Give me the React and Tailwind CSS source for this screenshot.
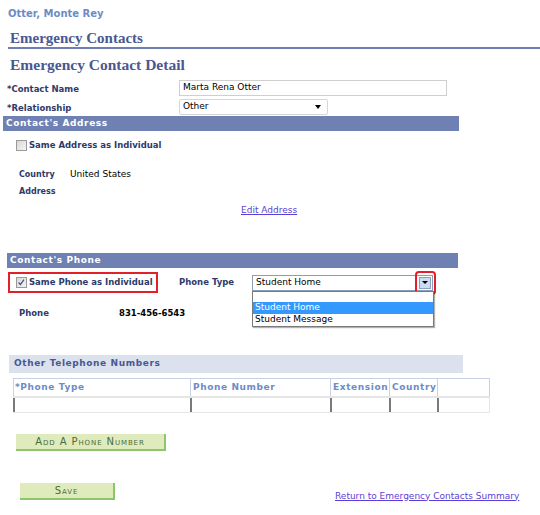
import React from 'react'

const label = 'text-[8.5px] font-bold text-[#2e3a6a] whitespace-nowrap'

function Box({ checked }) {
  return (
    <span className="relative inline-block w-[11px] h-[11px] border border-[#9a9a9a] bg-gradient-to-br from-[#d8d8d8] to-[#f4f4f4] shrink-0">
      {checked && (
        <svg viewBox="0 0 11 11" className="absolute inset-0 w-[9px] h-[9px]">
          <path d="M2 5.5 L4.2 8 L8.5 2" fill="none" stroke="#3a4a7a" strokeWidth="1.4" />
        </svg>
      )}
    </span>
  )
}

function Bar({ children, className }) {
  return (
    <div className={`h-[15px] bg-[#6f80b3] flex items-center pl-[3px] text-[9px] font-bold text-white tracking-[0.6px] ${className}`}>
      {children}
    </div>
  )
}

function Btn({ children, className }) {
  return (
    <div className={`h-[17px] bg-[#dfebbd] border-r-2 border-b-2 border-[#8cc66a] flex items-center justify-center text-[#4c6b38] text-[10px] tracking-[0.9px] [font-variant:small-caps] ${className}`}>
      {children}
    </div>
  )
}

export default function App() {
  return (
    <div className="w-[540px] h-[515px] bg-white overflow-hidden" style={{ fontFamily: '"DejaVu Sans", Verdana, sans-serif' }}>
      <div className="pt-[7px] pl-[8px] h-[21px] text-[10px] font-bold text-[#6d8cc6] leading-[14px]">Otter, Monte Rey</div>

      <div className="mt-[8px] ml-[8px] h-[20px] border-b-2 border-[#6e7cb0] flex items-center pl-[2px] text-[15px] font-bold text-[#4a5890]" style={{ fontFamily: '"Liberation Serif", serif' }}>
        Emergency Contacts
      </div>

      <div className="mt-[6px] ml-[10px] h-[20px] flex items-center text-[15.5px] font-bold text-[#4a5890]" style={{ fontFamily: '"Liberation Serif", serif' }}>
        Emergency Contact Detail
      </div>

      <div className="mt-[5px] h-[16px] flex items-center">
        <div className={`${label} w-[179px] pl-[7px] pt-[2px]`}>*Contact Name</div>
        <div className="w-[268px] h-[16px] border border-[#cfcfcf] flex items-center pl-[3px] text-[9px] text-black">Marta Rena Otter</div>
      </div>

      <div className="mt-[3px] h-[16px] flex items-center">
        <div className={`${label} w-[179px] pl-[7px] pt-[2px]`}>*Relationship</div>
        <div className="w-[149px] h-[16px] border border-[#d6d6d6] rounded-[2px] flex items-center justify-between pl-[3px] pr-[6px] text-[9px] text-black">
          <span>Other</span>
          <span className="w-0 h-0 border-l-[3px] border-r-[3px] border-t-[4px] border-l-transparent border-r-transparent border-t-black" />
        </div>
      </div>

      <Bar className="mt-[1px] ml-[3px] w-[456px]">Contact's Address</Bar>

      <div className="mt-[8px] h-[13px] flex items-center pl-[16px] gap-[2px]">
        <Box />
        <span className={label}>Same Address as Individual</span>
      </div>

      <div className="mt-[17px] h-[12px] flex items-center pl-[19px]">
        <span className="text-[8px] font-bold text-[#2e3a6a] w-[51px]">Country</span>
        <span className="text-[9px] text-black">United States</span>
      </div>
      <div className="mt-[5px] h-[12px] flex items-center pl-[19px] text-[8px] font-bold text-[#2e3a6a]">Address</div>

      <div className="mt-[7px] h-[12px] flex items-center pl-[241px]">
        <span className="text-[9px] text-[#5b3fd6] underline">Edit Address</span>
      </div>

      <Bar className="mt-[36px] ml-[7px] w-[451px]">Contact's Phone</Bar>

      <div className="mt-[4px] h-[21px] flex items-center">
        <div className="ml-[8px] w-[150px] h-[21px] border-2 border-[#e0202a] flex items-center pl-[6px] gap-[2px]">
          <Box checked />
          <span className={label}>Same Phone as Individual</span>
        </div>
        <span className={`${label} ml-[21px] w-[73px]`}>Phone Type</span>
        <div className="relative w-[181px] h-[16px] border border-[#8a9cb8] flex items-center pl-[3px] text-[9px] text-black">
          <span>Student Home</span>
          <div className="absolute right-[1px] top-[1px] w-[12px] h-[12px] bg-[#c9dcf0] border border-[#8aa0c0] flex items-center justify-center">
            <span className="w-0 h-0 border-l-[3px] border-r-[3px] border-t-[3px] border-l-transparent border-r-transparent border-t-black" />
          </div>
          <div className="absolute right-[-4px] top-[-5px] w-[21px] h-[24px] border-2 border-[#e0202a] rounded-[4px]" />
          <div className="absolute left-[-1px] top-[15px] w-[182px] h-[36px] bg-white border border-[#7a7a7a] shadow-[1px_1px_1px_rgba(0,0,0,0.3)] flex flex-col text-[9px] text-black">
            <div className="h-[11px]" />
            <div className="h-[12px] bg-[#3399ff] text-white flex items-center pl-[2px]">Student Home</div>
            <div className="h-[12px] flex items-center pl-[2px]">Student Message</div>
          </div>
        </div>
      </div>

      <div className="mt-[13px] h-[14px] flex items-center pl-[19px]">
        <span className={`${label} w-[100px]`}>Phone</span>
        <span className="text-[8.5px] font-bold text-black">831-456-6543</span>
      </div>

      <div className="mt-[35px] ml-[9px] w-[454px] h-[18px] bg-[#dbe2ed] flex items-center pl-[5px] text-[9px] font-bold text-[#4a5890] tracking-[0.6px]">
        Other Telephone Numbers
      </div>

      <div className="mt-[5px] ml-[13px] w-[477px]">
        <div className="flex h-[18px] border border-b-0 border-[#c8d2e4] text-[9px] font-bold text-[#6d8cc6] tracking-[0.6px]">
          <div className="w-[177px] border-r border-[#c8d2e4] flex items-center pl-[1px]">*Phone Type</div>
          <div className="w-[140px] border-r border-[#c8d2e4] flex items-center pl-[2px]">Phone Number</div>
          <div className="w-[59px] border-r border-[#c8d2e4] flex items-center pl-[2px]">Extension</div>
          <div className="w-[48px] border-r border-[#c8d2e4] flex items-center pl-[2px]">Country</div>
          <div className="flex-1" />
        </div>
        <div className="flex h-[17px] border-t-2 border-[#7a7a7a] border-b border-[#e6e6e6]">
          <div className="w-[177px] border-l-2 border-[#7a7a7a]" />
          <div className="w-[140px] border-l-2 border-[#7a7a7a]" />
          <div className="w-[59px] border-l-2 border-[#7a7a7a]" />
          <div className="w-[48px] border-l-2 border-[#7a7a7a]" />
          <div className="flex-1 border-l-2 border-r border-l-[#7a7a7a] border-r-[#e6e6e6]" />
        </div>
      </div>

      <Btn className="mt-[21px] ml-[16px] w-[150px]">Add A Phone Number</Btn>

      <div className="mt-[32px] flex items-end h-[17px]">
        <Btn className="ml-[20px] w-[95px]">Save</Btn>
        <span className="ml-[220px] mb-[-3px] text-[9px] text-[#5b3fd6] underline">Return to Emergency Contacts Summary</span>
      </div>
    </div>
  )
}
